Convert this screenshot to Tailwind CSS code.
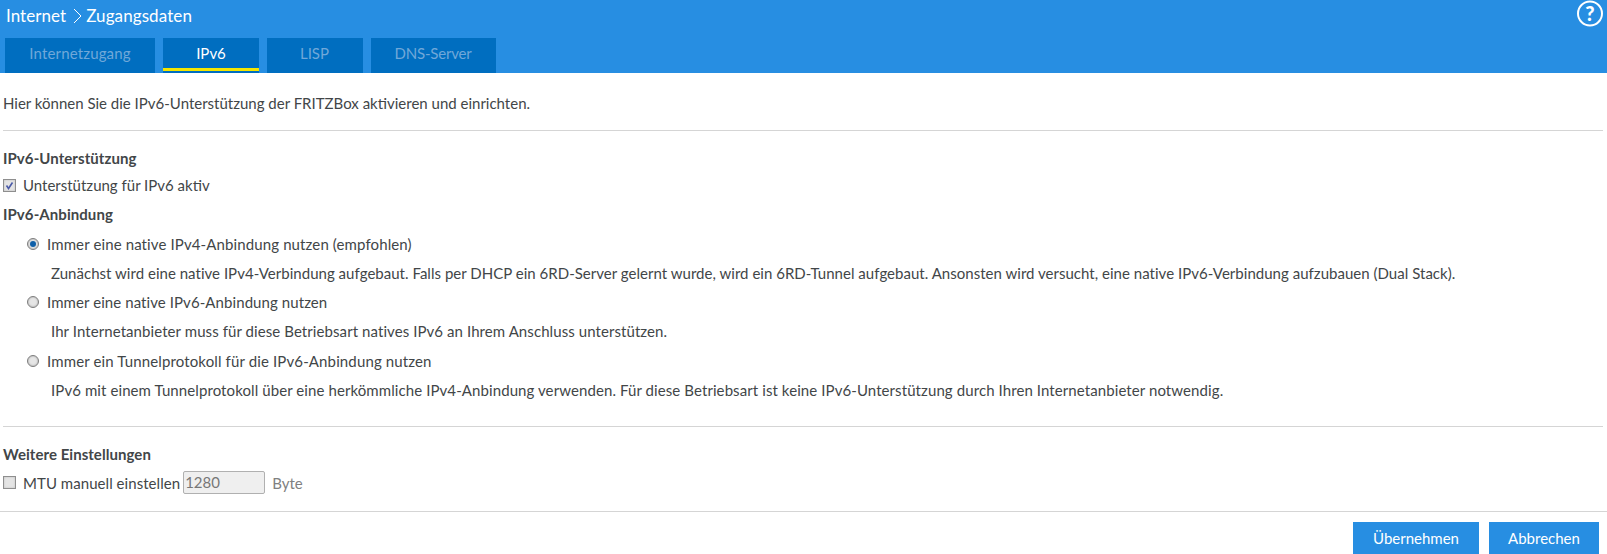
<!DOCTYPE html>
<html lang="de">
<head>
  <meta charset="UTF-8" />
  <title>Zugangsdaten</title>
  <script src="https://cdn.jsdelivr.net/npm/@tailwindcss/browser@4"></script>
</head>
<body class="h-[554px] overflow-hidden bg-white text-[15px] leading-5 text-[#424648] font-['Lato','Noto_Sans',sans-serif]">
  <!-- Header -->
  <header class="relative h-[73px] bg-[#278ee2]">
    <div class="h-[38px] pl-[6px] pt-[5px] flex items-start text-[17px] leading-[21px] text-white">
      <span class="tracking-[0.05px]">Internet</span>
      <svg class="mt-[3px] ml-[7px] mr-[4px]" width="9" height="16" viewBox="0 0 9 16" fill="none" stroke="white" stroke-width="1"><path d="M1 1l7 7-7 7" /></svg>
      <span class="tracking-[0.1px]">Zugangsdaten</span>
    </div>
    <svg class="absolute right-[4px] top-0" width="26" height="27" viewBox="0 0 26 27" fill="none">
      <circle cx="13" cy="13.5" r="12" stroke="white" stroke-width="2" />
      <text x="13" y="20.5" text-anchor="middle" fill="white" font-size="20" font-weight="900" font-family="Lato">?</text>
    </svg>
    <nav class="flex gap-2 pl-[5px] text-[15px]">
      <a class="w-[150px] h-[35px] pb-[5px] bg-[#006ec0] text-[#70a8d9] tracking-[0.15px] flex items-center justify-center">Internetzugang</a>
      <a class="relative w-[96px] h-[35px] pb-[5px] bg-[#006ec0] text-white flex items-center justify-center">IPv6
        <span class="absolute left-0 right-0 bottom-[2px] h-[3px] bg-[#f5e600]"></span>
      </a>
      <a class="w-[96px] h-[35px] pb-[5px] pr-[1px] bg-[#006ec0] text-[#70a8d9] flex items-center justify-center">LISP</a>
      <a class="w-[125px] h-[35px] pb-[5px] pr-[1px] bg-[#006ec0] text-[#70a8d9] tracking-[-0.2px] flex items-center justify-center">DNS-Server</a>
    </nav>
  </header>

  <main class="pl-[3px] pr-[4px]">
    <p class="pt-[20px] h-[57px]">Hier können Sie die IPv6-Unterstützung der FRITZBox aktivieren und einrichten.</p>
    <hr class="border-[#d5d5d5]" />

    <h3 class="mt-[17px] font-bold tracking-[0.07px]">IPv6-Unterstützung</h3>
    <label class="mt-[7px] flex items-center gap-[7px]">
      <span class="w-[13px] h-[13px] border border-[#8e8e8e] bg-[#e4e4e4] shadow-[inset_0_0_2px_#bbb] flex items-center justify-center">
        <svg width="11" height="11" viewBox="0 0 11 11" fill="none" stroke="#4a5aa8" stroke-width="1.6"><path d="M2.5 5.5l2 3 4-6" /></svg>
      </span>
      Unterstützung für IPv6 aktiv
    </label>
    <h3 class="mt-[9px] font-bold tracking-[0.07px]">IPv6-Anbindung</h3>

    <div class="mt-[10px] pl-[24px]">
      <label class="flex items-center gap-[8px] h-5 tracking-[0.12px]">
        <span class="w-[12px] h-[12px] rounded-full border border-[#7d7d7d] bg-[#e6e6e6] shadow-[inset_0_0_2px_#999] flex items-center justify-center">
          <span class="w-[6px] h-[6px] rounded-full bg-[#0f5fa8]"></span>
        </span>
        Immer eine native IPv4-Anbindung nutzen (empfohlen)
      </label>
      <p class="mt-[9px] pl-[24px] tracking-[0.025px]">Zunächst wird eine native IPv4-Verbindung aufgebaut. Falls per DHCP ein 6RD-Server gelernt wurde, wird ein 6RD-Tunnel aufgebaut. Ansonsten wird versucht, eine native IPv6-Verbindung aufzubauen (Dual Stack).</p>
      <label class="mt-[9px] flex items-center gap-[8px] h-5 tracking-[0.08px]">
        <span class="w-[12px] h-[12px] rounded-full border border-[#7d7d7d] bg-[#e6e6e6] shadow-[inset_0_0_2px_#999]"></span>
        Immer eine native IPv6-Anbindung nutzen
      </label>
      <p class="mt-[9px] pl-[24px] tracking-[0.08px]">Ihr Internetanbieter muss für diese Betriebsart natives IPv6 an Ihrem Anschluss unterstützen.</p>
      <label class="mt-[10px] flex items-center gap-[8px] h-5 tracking-[0.13px]">
        <span class="w-[12px] h-[12px] rounded-full border border-[#7d7d7d] bg-[#e6e6e6] shadow-[inset_0_0_2px_#999]"></span>
        Immer ein Tunnelprotokoll für die IPv6-Anbindung nutzen
      </label>
      <p class="mt-[9px] pl-[24px] tracking-[0.09px]">IPv6 mit einem Tunnelprotokoll über eine herkömmliche IPv4-Anbindung verwenden. Für diese Betriebsart ist keine IPv6-Unterstützung durch Ihren Internetanbieter notwendig.</p>
    </div>

    <hr class="mt-[26px] border-[#d5d5d5]" />
    <h3 class="mt-[17px] font-bold tracking-[0.05px]">Weitere Einstellungen</h3>
    <div class="mt-[7px] flex items-center h-[23px]">
      <span class="w-[13px] h-[13px] border border-[#8e8e8e] bg-[#e4e4e4] shadow-[inset_0_0_2px_#bbb] mr-[7px]"></span>
      <span class="tracking-[0.05px]">MTU manuell einstellen</span>
      <span class="ml-[3px] w-[82px] h-[23px] border border-[#b0b0b0] rounded-[2px] bg-[#efefef] text-[#777] pl-[1px] leading-[21px]">1280</span>
      <span class="ml-[7px] text-[#808080]">Byte</span>
    </div>
  </main>

  <!-- Footer -->
  <footer class="mt-[17px] border-t border-[#d5d5d5] flex justify-end gap-[10px] pt-[10px] pr-2">
    <button class="w-[126px] h-[32px] bg-[#278ee2] text-white">Übernehmen</button>
    <button class="w-[110px] h-[32px] bg-[#278ee2] text-white">Abbrechen</button>
  </footer>
</body>
</html>
